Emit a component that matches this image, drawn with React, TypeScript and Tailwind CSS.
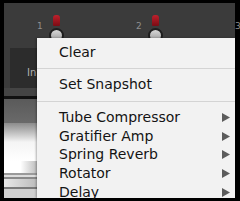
import React from 'react';

const items = ['Tube Compressor', 'Gratifier Amp', 'Spring Reverb', 'Rotator', 'Delay'];

function Knob({ label }: { label: string }) {
  return (
    <div className="flex items-start">
      <span className="mt-[7px] mr-[7px] w-[5px] text-[9px] leading-none text-[#8f8f8f]">{label}</span>
      <div className="flex flex-col items-center">
        <div className="h-[11px] w-[7px] rounded-t-[3px] rounded-b-[1px] bg-gradient-to-b from-[#c0202c] to-[#7a0c14]" />
        <div className="mt-[2px] h-[15px] w-[15px] rounded-full border-[2px] border-[#1e1e1e] bg-gradient-to-b from-[#d8d8d8] to-[#9a9a9a]" />
      </div>
    </div>
  );
}

function Arrow() {
  return (
    <svg width="8" height="9" viewBox="0 0 8 9" className="shrink-0">
      <path d="M0 0 L8 4.5 L0 9 Z" fill="#5c5c5c" />
    </svg>
  );
}

export default function App() {
  return (
    <div
      className="relative h-[201px] w-[240px] overflow-hidden bg-black pb-[3px] pl-[4px] pr-[5px] pt-[3px]"
      style={{ fontFamily: '"DejaVu Sans", "Liberation Sans", sans-serif' }}
    >
      <div className="relative flex h-full flex-col bg-[#3b3b3b]">
        {/* knob strip */}
        <div className="flex gap-[72px] pl-[33px] pt-[12px]">
          <Knob label="1" />
          <Knob label="2" />
          <Knob label="3" />
        </div>

        {/* left panel under the menu */}
        <div className="mt-[5px] flex w-[33px] flex-1 flex-col">
          <div className="ml-[6px] flex h-[40px] items-end bg-[#2c2c2c] pb-[10px] pl-[17px] text-[10px] leading-none text-[#b0b0b0]">
            In
          </div>
          <div className="h-[8px] bg-[#444]" />
          <div className="h-[3px] bg-[#111]" />
          <div className="h-[24px] bg-gradient-to-b from-[#5a5a5a] to-[#6a6a6a]" />
          <div className="h-[38px] bg-gradient-to-b from-[#8c8c8c] via-[#f4f4f4] to-white" />
          <div className="h-[12px] bg-gradient-to-r from-white via-white to-[#bdbdbd]" />
          <div className="h-[2px] bg-[#9a9a9a]" />
          <div className="h-[2px] bg-[#dcdcdc]" />
          <div className="h-[2px] bg-[#8a8a8a]" />
          <div className="h-[8px] bg-gradient-to-r from-[#e8e8e8] to-[#bcbcbc]" />
          <div className="h-[2px] bg-[#7a7a7a]" />
          <div className="flex-1 bg-[#d0d0d0]" />
        </div>

        {/* context menu */}
        <div className="absolute left-[33px] right-0 top-[35px] bottom-0 bg-[#f2f2f2] pt-[5px] shadow-[-1px_0_2px_rgba(0,0,0,0.3)] text-[14px] text-[#141414]">
          <div className="flex h-[18.5px] items-center pl-[22px]">Clear</div>
          <div className="flex h-[14px] items-center">
            <div className="h-px w-full bg-[#d4d4d4]" />
          </div>
          <div className="flex h-[18.5px] items-center pl-[22px]">Set Snapshot</div>
          <div className="flex h-[14px] items-center">
            <div className="h-px w-full bg-[#d4d4d4]" />
          </div>
          {items.map((item) => (
            <div key={item} className="flex h-[18.75px] items-center justify-between pl-[22px] pr-[5px]">
              <span>{item}</span>
              <Arrow />
            </div>
          ))}
        </div>
      </div>
    </div>
  );
}
